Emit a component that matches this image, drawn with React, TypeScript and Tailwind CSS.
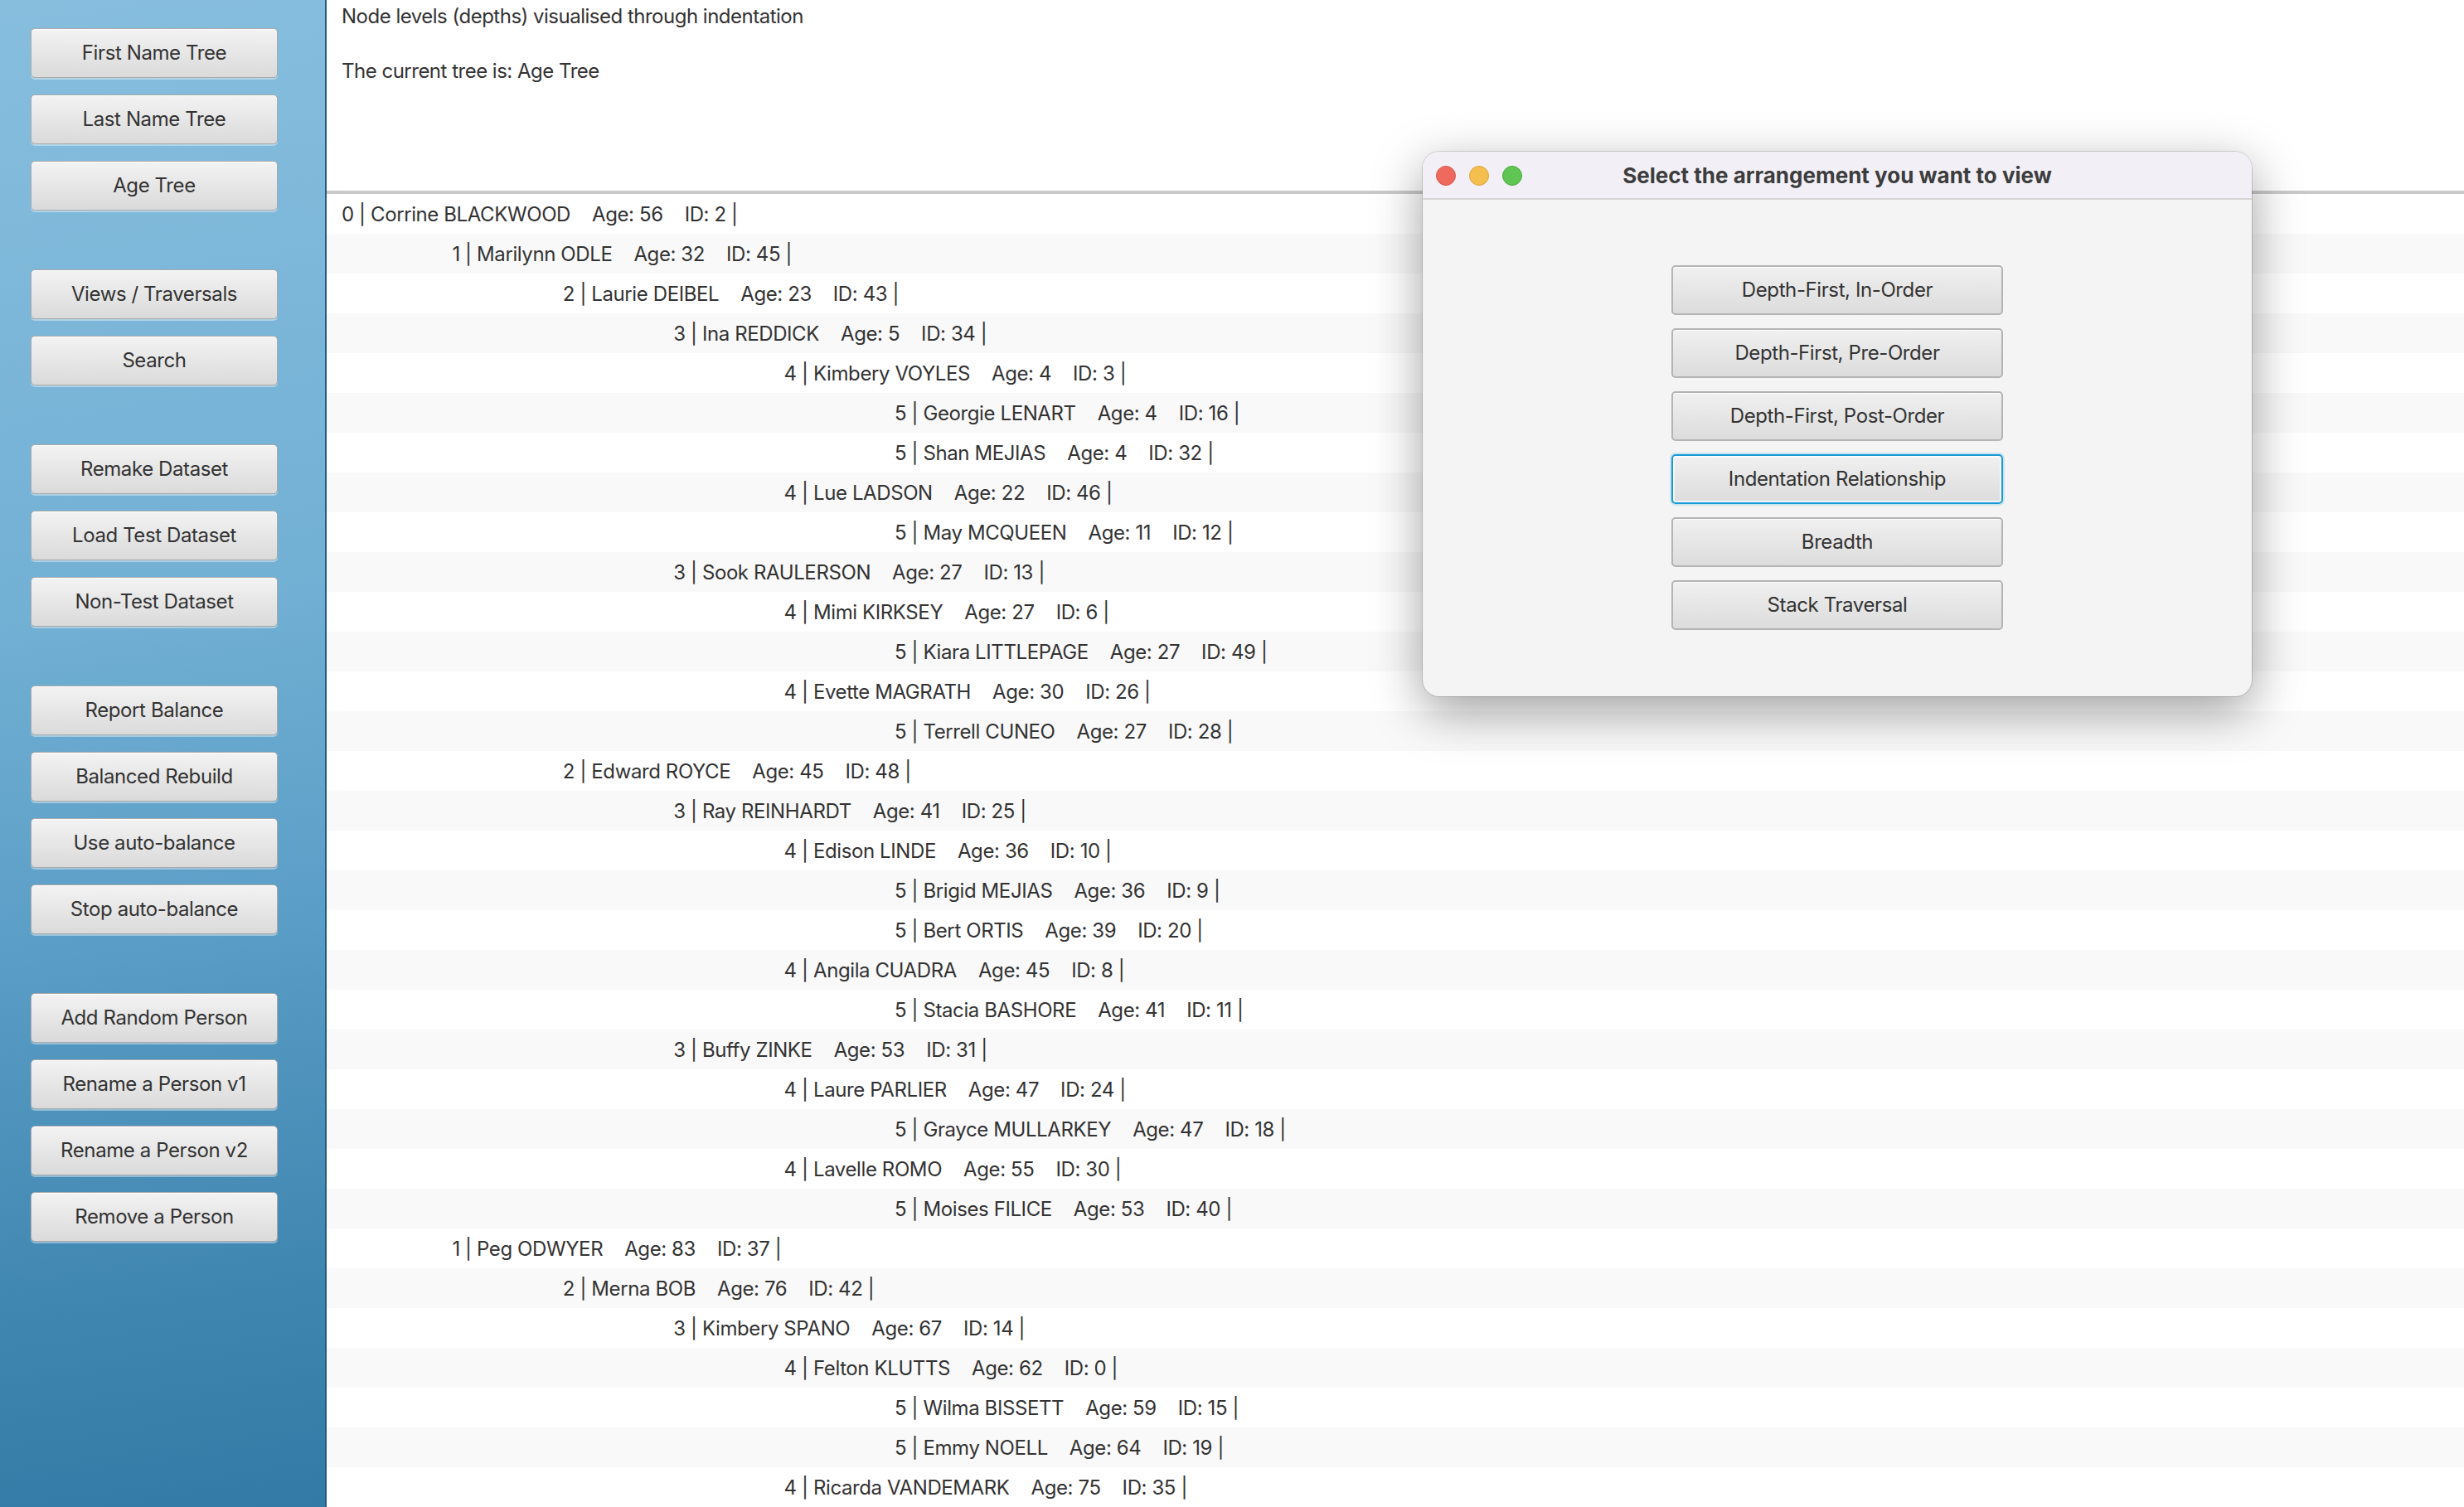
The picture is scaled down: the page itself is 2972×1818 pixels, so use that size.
import React from "react";

const groups: string[][] = [
  ["First Name Tree", "Last Name Tree", "Age Tree"],
  ["Views / Traversals", "Search"],
  ["Remake Dataset", "Load Test Dataset", "Non-Test Dataset"],
  ["Report Balance", "Balanced Rebuild", "Use auto-balance", "Stop auto-balance"],
  ["Add Random Person", "Rename a Person v1", "Rename a Person v2", "Remove a Person"],
];

type Row = [number, string, number, number];
const rows: Row[] = [
  [0, "Corrine BLACKWOOD", 56, 2],
  [1, "Marilynn ODLE", 32, 45],
  [2, "Laurie DEIBEL", 23, 43],
  [3, "Ina REDDICK", 5, 34],
  [4, "Kimbery VOYLES", 4, 3],
  [5, "Georgie LENART", 4, 16],
  [5, "Shan MEJIAS", 4, 32],
  [4, "Lue LADSON", 22, 46],
  [5, "May MCQUEEN", 11, 12],
  [3, "Sook RAULERSON", 27, 13],
  [4, "Mimi KIRKSEY", 27, 6],
  [5, "Kiara LITTLEPAGE", 27, 49],
  [4, "Evette MAGRATH", 30, 26],
  [5, "Terrell CUNEO", 27, 28],
  [2, "Edward ROYCE", 45, 48],
  [3, "Ray REINHARDT", 41, 25],
  [4, "Edison LINDE", 36, 10],
  [5, "Brigid MEJIAS", 36, 9],
  [5, "Bert ORTIS", 39, 20],
  [4, "Angila CUADRA", 45, 8],
  [5, "Stacia BASHORE", 41, 11],
  [3, "Buffy ZINKE", 53, 31],
  [4, "Laure PARLIER", 47, 24],
  [5, "Grayce MULLARKEY", 47, 18],
  [4, "Lavelle ROMO", 55, 30],
  [5, "Moises FILICE", 53, 40],
  [1, "Peg ODWYER", 83, 37],
  [2, "Merna BOB", 76, 42],
  [3, "Kimbery SPANO", 67, 14],
  [4, "Felton KLUTTS", 62, 0],
  [5, "Wilma BISSETT", 59, 15],
  [5, "Emmy NOELL", 64, 19],
  [4, "Ricarda VANDEMARK", 75, 35],
];

const dialogButtons = [
  "Depth-First, In-Order",
  "Depth-First, Pre-Order",
  "Depth-First, Post-Order",
  "Indentation Relationship",
  "Breadth",
  "Stack Traversal",
];

const font = { fontFamily: "Inter, 'Liberation Sans', sans-serif" };

function SideButton({ label }: { label: string }) {
  return (
    <button className="w-[298px] h-[60px] rounded-[5px] border border-[#a9a9a9] bg-[linear-gradient(to_bottom,#f3f3f3,#dadada)] text-[#333] text-[24px] tracking-[-0.4px] shadow-[inset_0_1px_0_rgba(255,255,255,0.9),0_2px_0_rgba(255,255,255,0.4)] flex items-center justify-center">
      {label}
    </button>
  );
}

function DialogButton({ label, selected }: { label: string; selected?: boolean }) {
  return (
    <button
      className={
        selected
          ? "w-[400px] h-[60px] rounded-[5px] border-2 border-[#1a9ad8] bg-[linear-gradient(to_bottom,#f0f0f0,#dcdcdc)] text-[#333] text-[24px] tracking-[-0.4px] shadow-[0_0_0_2px_rgba(26,154,216,0.18),inset_0_0_0_2px_rgba(255,255,255,0.7)] flex items-center justify-center"
          : "w-[400px] h-[60px] rounded-[5px] border-2 border-[#b4b4b4] bg-[linear-gradient(to_bottom,#f0f0f0,#dcdcdc)] text-[#333] text-[24px] tracking-[-0.4px] shadow-[inset_0_1px_0_rgba(255,255,255,0.9)] flex items-center justify-center"
      }
    >
      {label}
    </button>
  );
}

export default function App() {
  return (
    <div className="relative flex w-[2972px] h-[1818px] overflow-hidden bg-white" style={font}>
      {/* Sidebar */}
      <div className="w-[394px] h-full shrink-0 border-r-2 border-[#245b7f] bg-[linear-gradient(172deg,#87bede_0%,#72b0d4_40%,#5a9dc6_62%,#3f86b0_85%,#337ba6_100%)] pt-[34px] pl-[37px] flex flex-col gap-[71px]">
        {groups.map((g, i) => (
          <div key={i} className="flex flex-col gap-[20px]">
            {g.map((b) => (
              <SideButton key={b} label={b} />
            ))}
          </div>
        ))}
      </div>

      {/* Main */}
      <div className="flex-1 flex flex-col min-w-0">
        <div className="h-[230px] shrink-0 pl-[18px] pt-[3px] text-[24px] leading-[33px] tracking-[-0.5px] text-[#333]">
          <div>Node levels (depths) visualised through indentation</div>
          <div className="h-[33px]" />
          <div>The current tree is: Age Tree</div>
        </div>
        <div className="h-[4px] shrink-0 bg-[#c9c9c9]" />
        <div className="flex flex-col">
          {rows.map(([d, name, age, id], i) => (
            <div
              key={i}
              className={
                (i % 2 === 0 ? "bg-white" : "bg-[#f9f9f9]") +
                " h-[48px] shrink-0 flex items-center gap-[26px] pt-[1px] text-[24px] tracking-[-0.4px] text-[#333] whitespace-pre"
              }
              style={{ paddingLeft: 18 + d * 133.4 }}
            >
              <span>{`${d} | ${name}`}</span>
              <span>{`Age: ${age}`}</span>
              <span>{`ID: ${id} |`}</span>
            </div>
          ))}
        </div>
      </div>

      {/* Dialog */}
      <div className="absolute left-[1716px] top-[183px] w-[1000px] h-[657px] rounded-[20px] bg-[#f4f4f4] overflow-hidden shadow-[0_18px_60px_rgba(0,0,0,0.38),0_0_0_1px_rgba(0,0,0,0.14)] flex flex-col">
        <div className="relative h-[58px] shrink-0 bg-[#f2f0f6] border-b-2 border-[#d6d6d6] flex items-center justify-center">
          <div className="absolute left-[16px] top-[17px] flex gap-[16px]">
            <div className="w-[24px] h-[24px] rounded-full bg-[#ee6a5e] border border-[#d5574c]" />
            <div className="w-[24px] h-[24px] rounded-full bg-[#f5bf4f] border border-[#d9a33b]" />
            <div className="w-[24px] h-[24px] rounded-full bg-[#61c554] border border-[#4aa93e]" />
          </div>
          <span className="text-[26px] font-bold text-[#3d3d3d] tracking-[0px]">Select the arrangement you want to view</span>
        </div>
        <div className="flex-1 flex flex-col items-center pt-[79px] gap-[16px]">
          {dialogButtons.map((b) => (
            <DialogButton key={b} label={b} selected={b === "Indentation Relationship"} />
          ))}
        </div>
      </div>
    </div>
  );
}
